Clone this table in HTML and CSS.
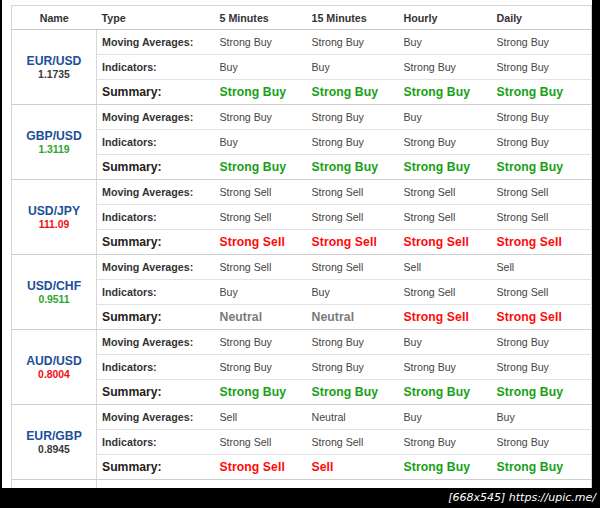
FILE: index.html
```html
<!DOCTYPE html>
<html>
<head>
<meta charset="utf-8">
<link rel="stylesheet" href="styles.css">
</head>
<body>
<div class="frame">
  <div class="sheet">
    <table class="tech">
      <colgroup>
        <col class="c-name"><col class="c-type"><col class="c-5m"><col class="c-15m"><col class="c-h"><col class="c-d">
      </colgroup>
      <thead>
        <tr><th class="name">Name</th><th>Type</th><th>5 Minutes</th><th>15 Minutes</th><th>Hourly</th><th>Daily</th></tr>
      </thead>
      <tbody>
        <tr class="ma"><td class="pair" rowspan="3"><div class="sym">EUR/USD</div><div class="px dark">1.1735</div></td><td class="lbl">Moving Averages:</td><td>Strong Buy</td><td>Strong Buy</td><td>Buy</td><td>Strong Buy</td></tr>
        <tr class="ind"><td class="lbl">Indicators:</td><td>Buy</td><td>Buy</td><td>Strong Buy</td><td>Strong Buy</td></tr>
        <tr class="sum"><td class="lbl">Summary:</td><td class="buy">Strong Buy</td><td class="buy">Strong Buy</td><td class="buy">Strong Buy</td><td class="buy">Strong Buy</td></tr>

        <tr class="ma"><td class="pair" rowspan="3"><div class="sym">GBP/USD</div><div class="px up">1.3119</div></td><td class="lbl">Moving Averages:</td><td>Strong Buy</td><td>Strong Buy</td><td>Buy</td><td>Strong Buy</td></tr>
        <tr class="ind"><td class="lbl">Indicators:</td><td>Buy</td><td>Strong Buy</td><td>Strong Buy</td><td>Strong Buy</td></tr>
        <tr class="sum"><td class="lbl">Summary:</td><td class="buy">Strong Buy</td><td class="buy">Strong Buy</td><td class="buy">Strong Buy</td><td class="buy">Strong Buy</td></tr>

        <tr class="ma"><td class="pair" rowspan="3"><div class="sym">USD/JPY</div><div class="px down">111.09</div></td><td class="lbl">Moving Averages:</td><td>Strong Sell</td><td>Strong Sell</td><td>Strong Sell</td><td>Strong Sell</td></tr>
        <tr class="ind"><td class="lbl">Indicators:</td><td>Strong Sell</td><td>Strong Sell</td><td>Strong Sell</td><td>Strong Sell</td></tr>
        <tr class="sum"><td class="lbl">Summary:</td><td class="sell">Strong Sell</td><td class="sell">Strong Sell</td><td class="sell">Strong Sell</td><td class="sell">Strong Sell</td></tr>

        <tr class="ma"><td class="pair" rowspan="3"><div class="sym">USD/CHF</div><div class="px up">0.9511</div></td><td class="lbl">Moving Averages:</td><td>Strong Sell</td><td>Strong Sell</td><td>Sell</td><td>Sell</td></tr>
        <tr class="ind"><td class="lbl">Indicators:</td><td>Buy</td><td>Buy</td><td>Strong Sell</td><td>Strong Sell</td></tr>
        <tr class="sum"><td class="lbl">Summary:</td><td class="neu">Neutral</td><td class="neu">Neutral</td><td class="sell">Strong Sell</td><td class="sell">Strong Sell</td></tr>

        <tr class="ma"><td class="pair" rowspan="3"><div class="sym">AUD/USD</div><div class="px down">0.8004</div></td><td class="lbl">Moving Averages:</td><td>Strong Buy</td><td>Strong Buy</td><td>Buy</td><td>Strong Buy</td></tr>
        <tr class="ind"><td class="lbl">Indicators:</td><td>Strong Buy</td><td>Strong Buy</td><td>Strong Buy</td><td>Strong Buy</td></tr>
        <tr class="sum"><td class="lbl">Summary:</td><td class="buy">Strong Buy</td><td class="buy">Strong Buy</td><td class="buy">Strong Buy</td><td class="buy">Strong Buy</td></tr>

        <tr class="ma"><td class="pair" rowspan="3"><div class="sym">EUR/GBP</div><div class="px dark">0.8945</div></td><td class="lbl">Moving Averages:</td><td>Sell</td><td>Neutral</td><td>Buy</td><td>Buy</td></tr>
        <tr class="ind"><td class="lbl">Indicators:</td><td>Strong Sell</td><td>Strong Sell</td><td>Strong Buy</td><td>Strong Buy</td></tr>
        <tr class="sum"><td class="lbl">Summary:</td><td class="sell">Strong Sell</td><td class="sell">Sell</td><td class="buy">Strong Buy</td><td class="buy">Strong Buy</td></tr>

        <tr class="ma"><td class="pair" rowspan="3"><div class="sym">USD/CAD</div><div class="px dark">1.2580</div></td><td class="lbl">Moving Averages:</td><td>Strong Sell</td><td>Strong Sell</td><td>Sell</td><td>Strong Sell</td></tr>
        <tr class="ind"><td class="lbl">Indicators:</td><td>Strong Sell</td><td>Strong Sell</td><td>Strong Sell</td><td>Strong Sell</td></tr>
        <tr class="sum"><td class="lbl">Summary:</td><td class="sell">Strong Sell</td><td class="sell">Strong Sell</td><td class="sell">Strong Sell</td><td class="sell">Strong Sell</td></tr>
      </tbody>
    </table>
  </div>
  <div class="mark">[668x545] https://upic.me/</div>
</div>
</body>
</html>
```
FILE: styles.css
```css
html, body {
  margin: 0;
  padding: 0;
  background: #000;
}
.frame {
  width: 600px;
  height: 508px;
  display: flex;
  flex-direction: column;
  overflow: hidden;
  background: #000;
}
.sheet {
  height: 488px;
  width: 590px;
  margin-left: 2px;
  background: #fff;
  overflow: hidden;
  padding: 5px 0 0 9px;
  box-sizing: border-box;
}
.tech {
  table-layout: fixed;
  border-collapse: collapse;
  width: 580px;
  font-family: "Liberation Sans", Arial, sans-serif;
  color: #3a3a3a;
  border: 1px solid #d4d4d4;
}
.c-name { width: 85px; }
.c-type { width: 118px; }
.c-5m { width: 92px; }
.c-15m { width: 92px; }
.c-h { width: 93px; }
.c-d { width: 100px; }
.tech th {
  height: 23px;
  padding: 0 0 0 5px;
  text-align: left;
  font-size: 10.7px;
  font-weight: bold;
  color: #333;
  border-bottom: 1px solid #c8c8c8;
  white-space: nowrap;
}
.tech th.name {
  text-align: center;
  padding: 0;
}
.tech td {
  height: 24px;
  padding: 0 0 0 5px;
  font-size: 10.6px;
  color: #444;
  border-bottom: 1px solid #e2e2e2;
  white-space: nowrap;
  overflow: hidden;
}
.tech tr.sum td {
  border-bottom: 1px solid #cfcfcf;
}
.tech td.pair {
  text-align: center;
  padding: 0;
  border-right: 1px solid #d8d8d8;
  border-bottom: 1px solid #cfcfcf;
}
.tech td.lbl {
  font-weight: bold;
  color: #333;
  font-size: 10.7px;
}
.tech tr.sum td.lbl {
  font-size: 12.2px;
  color: #222;
}
.sym {
  font-size: 12.2px;
  font-weight: bold;
  color: #1c4f9c;
  line-height: 14px;
}
.px {
  font-size: 10.4px;
  font-weight: bold;
  line-height: 13px;
}
.px.dark { color: #3a3a3a; }
.px.up { color: #2fa52f; }
.px.down { color: #f01010; }
.tech td.buy, .tech td.sell, .tech td.neu {
  font-size: 12.2px;
  font-weight: bold;
  letter-spacing: 0.1px;
}
.tech td.buy { color: #16a016; }
.tech td.sell { color: #ff0a0a; }
.tech td.neu { color: #7a7a7a; }
.mark {
  height: 20px;
  text-align: right;
  padding-right: 4px;
  color: #fff;
  font-family: "DejaVu Sans", sans-serif;
  font-style: italic;
  font-size: 11px;
  line-height: 20px;
}
```
